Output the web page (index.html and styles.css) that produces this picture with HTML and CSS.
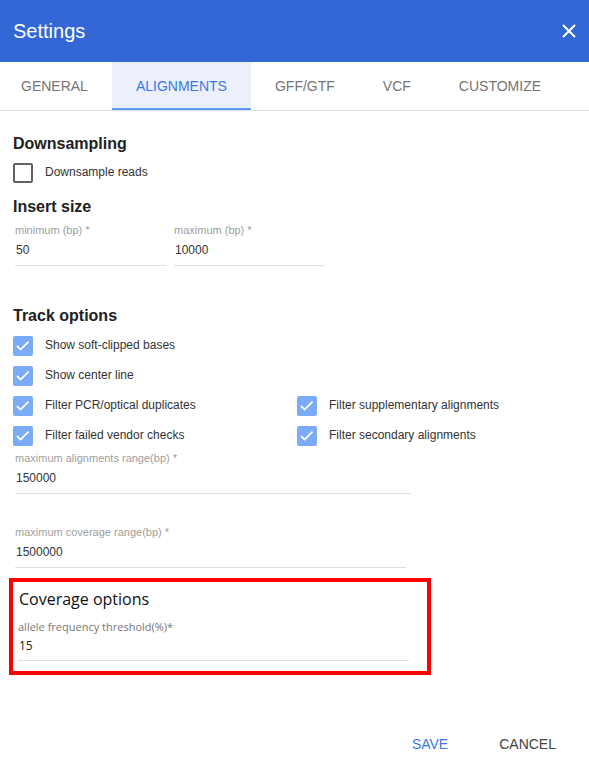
FILE: index.html
```html
<!DOCTYPE html>
<html lang="en">
<head>
<meta charset="utf-8">
<title>Settings</title>
<link rel="stylesheet" href="styles.css">
</head>
<body>
<div class="dialog">
  <header class="titlebar">
    <h1 class="title">Settings</h1>
    <button class="close" aria-label="Close">
      <svg width="14" height="14" viewBox="0 0 14 14"><path d="M1 1 L13 13 M13 1 L1 13" stroke="#fff" stroke-width="2" fill="none"/></svg>
    </button>
  </header>
  <nav class="tabs">
    <div class="tab first">General</div>
    <div class="tab active">Alignments</div>
    <div class="tab">GFF/GTF</div>
    <div class="tab">VCF</div>
    <div class="tab">Customize</div>
  </nav>
  <main class="content">
    <h2 class="heading">Downsampling</h2>
    <label class="check down">
      <span class="box"></span>
      <span class="check-label">Downsample reads</span>
    </label>
    <h2 class="heading insert">Insert size</h2>
    <div class="field-row">
      <div class="field half">
        <div class="field-label">minimum (bp) *</div>
        <div class="field-value">50</div>
      </div>
      <div class="field half">
        <div class="field-label">maximum (bp) *</div>
        <div class="field-value">10000</div>
      </div>
    </div>
    <h2 class="heading track">Track options</h2>
    <div class="checks">
      <label class="check wide"><span class="box on"><svg width="20" height="20" viewBox="0 0 20 20"><path d="M4 10 L7.6 13.6 L15.6 5.6" stroke="#fff" stroke-width="1.8" fill="none"/></svg></span><span class="check-label">Show soft-clipped bases</span></label>
      <label class="check wide"><span class="box on"><svg width="20" height="20" viewBox="0 0 20 20"><path d="M4 10 L7.6 13.6 L15.6 5.6" stroke="#fff" stroke-width="1.8" fill="none"/></svg></span><span class="check-label">Show center line</span></label>
      <label class="check"><span class="box on"><svg width="20" height="20" viewBox="0 0 20 20"><path d="M4 10 L7.6 13.6 L15.6 5.6" stroke="#fff" stroke-width="1.8" fill="none"/></svg></span><span class="check-label">Filter PCR/optical duplicates</span></label>
      <label class="check"><span class="box on"><svg width="20" height="20" viewBox="0 0 20 20"><path d="M4 10 L7.6 13.6 L15.6 5.6" stroke="#fff" stroke-width="1.8" fill="none"/></svg></span><span class="check-label">Filter supplementary alignments</span></label>
      <label class="check"><span class="box on"><svg width="20" height="20" viewBox="0 0 20 20"><path d="M4 10 L7.6 13.6 L15.6 5.6" stroke="#fff" stroke-width="1.8" fill="none"/></svg></span><span class="check-label">Filter failed vendor checks</span></label>
      <label class="check"><span class="box on"><svg width="20" height="20" viewBox="0 0 20 20"><path d="M4 10 L7.6 13.6 L15.6 5.6" stroke="#fff" stroke-width="1.8" fill="none"/></svg></span><span class="check-label">Filter secondary alignments</span></label>
    </div>
    <div class="field align-range">
      <div class="field-label">maximum alignments range(bp) *</div>
      <div class="field-value">150000</div>
    </div>
    <div class="field cov-range">
      <div class="field-label">maximum coverage range(bp) *</div>
      <div class="field-value">1500000</div>
    </div>
    <section class="coverage-box">
      <h2 class="cov-heading">Coverage options</h2>
      <div class="field cov-field">
        <div class="field-label">allele frequency threshold(%)*</div>
        <div class="field-value">15</div>
      </div>
    </section>
  </main>
  <footer class="actions">
    <button class="btn save">Save</button>
    <button class="btn cancel">Cancel</button>
  </footer>
</div>
</body>
</html>
```
FILE: styles.css
```css
html, body {
  margin: 0;
  padding: 0;
  background: #fff;
}
body {
  font-family: "Liberation Sans", Arial, sans-serif;
  color: #333;
}
.dialog {
  width: 589px;
}
.titlebar {
  height: 62px;
  background: #3367d6;
  display: flex;
  align-items: center;
  justify-content: space-between;
  padding: 0 13px;
}
.title {
  margin: 0;
  font-size: 20px;
  font-weight: 400;
  line-height: 62px;
  color: #fff;
}
.close {
  background: none;
  border: 0;
  padding: 0;
  width: 14px;
  height: 14px;
  display: flex;
  margin-top: -1px;
  cursor: pointer;
}
.tabs {
  display: flex;
  height: 48px;
  border-bottom: 1px solid #e0e0e0;
}
.tab {
  padding: 0 24px;
  font-size: 14px;
  line-height: 48px;
  color: #757575;
  text-transform: uppercase;
  white-space: nowrap;
}
.tab.first {
  margin-left: -3px;
}
.tab.active {
  background: #ebf0fb;
  color: #3b78e7;
  box-shadow: inset 0 -2px 0 #5e97f6;
}
.content {
  padding: 23px 13px 0;
}
.heading {
  margin: 0;
  font-size: 16px;
  font-weight: 700;
  line-height: 20px;
  color: #212121;
}
.heading.insert {
  margin-top: 13.5px;
}
.heading.track {
  margin-top: 40px;
}
.check {
  display: flex;
  align-items: center;
  gap: 12px;
  height: 20px;
}
.check.down {
  margin-top: 9px;
}
.box {
  width: 20px;
  height: 20px;
  box-sizing: border-box;
  border: 2px solid #5f6368;
  border-radius: 2px;
  flex: none;
}
.box.on {
  border: 0;
  background: #7baaf7;
  display: flex;
}
.check-label {
  font-size: 12px;
  line-height: 14px;
  padding-bottom: 2px;
  color: #333;
  white-space: nowrap;
}
.checks {
  display: grid;
  grid-template-columns: 284px 1fr;
  row-gap: 10px;
  margin-top: 10px;
}
.check.wide {
  grid-column: 1 / -1;
}
.field-row {
  display: flex;
  gap: 8px;
  margin-top: 6px;
  padding-left: 2px;
}
.field.half {
  width: 151px;
}
.field-label {
  font-size: 11px;
  line-height: 14px;
  color: #9e9e9e;
  white-space: nowrap;
}
.field-value {
  margin-top: 5px;
  font-size: 12px;
  line-height: 16px;
  padding: 0 0 7px 1px;
  color: #333;
  border-bottom: 1px solid #e0e0e0;
}
.align-range {
  width: 396px;
  margin: 5px 0 0 2px;
}
.cov-range {
  width: 391px;
  margin: 31px 0 0 2px;
}
.coverage-box {
  margin: 10px 0 0 -4px;
  width: 422px;
  box-sizing: border-box;
  border: 4px solid #ff0000;
  padding: 6.5px 18px 10px 5px;
  font-family: "Open Sans", "Liberation Sans", sans-serif;
}
.cov-heading {
  margin: 0;
  padding-left: 1px;
  font-size: 16px;
  font-weight: 400;
  line-height: 22px;
  color: #111;
}
.cov-field {
  width: 391px;
  margin-top: 10px;
}
.cov-field .field-label {
  color: #777;
}
.cov-field .field-value {
  margin-top: 4px;
  padding-bottom: 6px;
  color: #222;
}
.actions {
  display: flex;
  justify-content: flex-end;
  gap: 51px;
  padding-right: 33px;
  margin-top: 61px;
}
.btn {
  background: none;
  border: 0;
  padding: 0;
  font-family: "Liberation Sans", Arial, sans-serif;
  font-size: 14px;
  line-height: 16px;
  text-transform: uppercase;
  cursor: pointer;
}
.btn.save {
  color: #3b78e7;
}
.btn.cancel {
  color: #424242;
}
```
